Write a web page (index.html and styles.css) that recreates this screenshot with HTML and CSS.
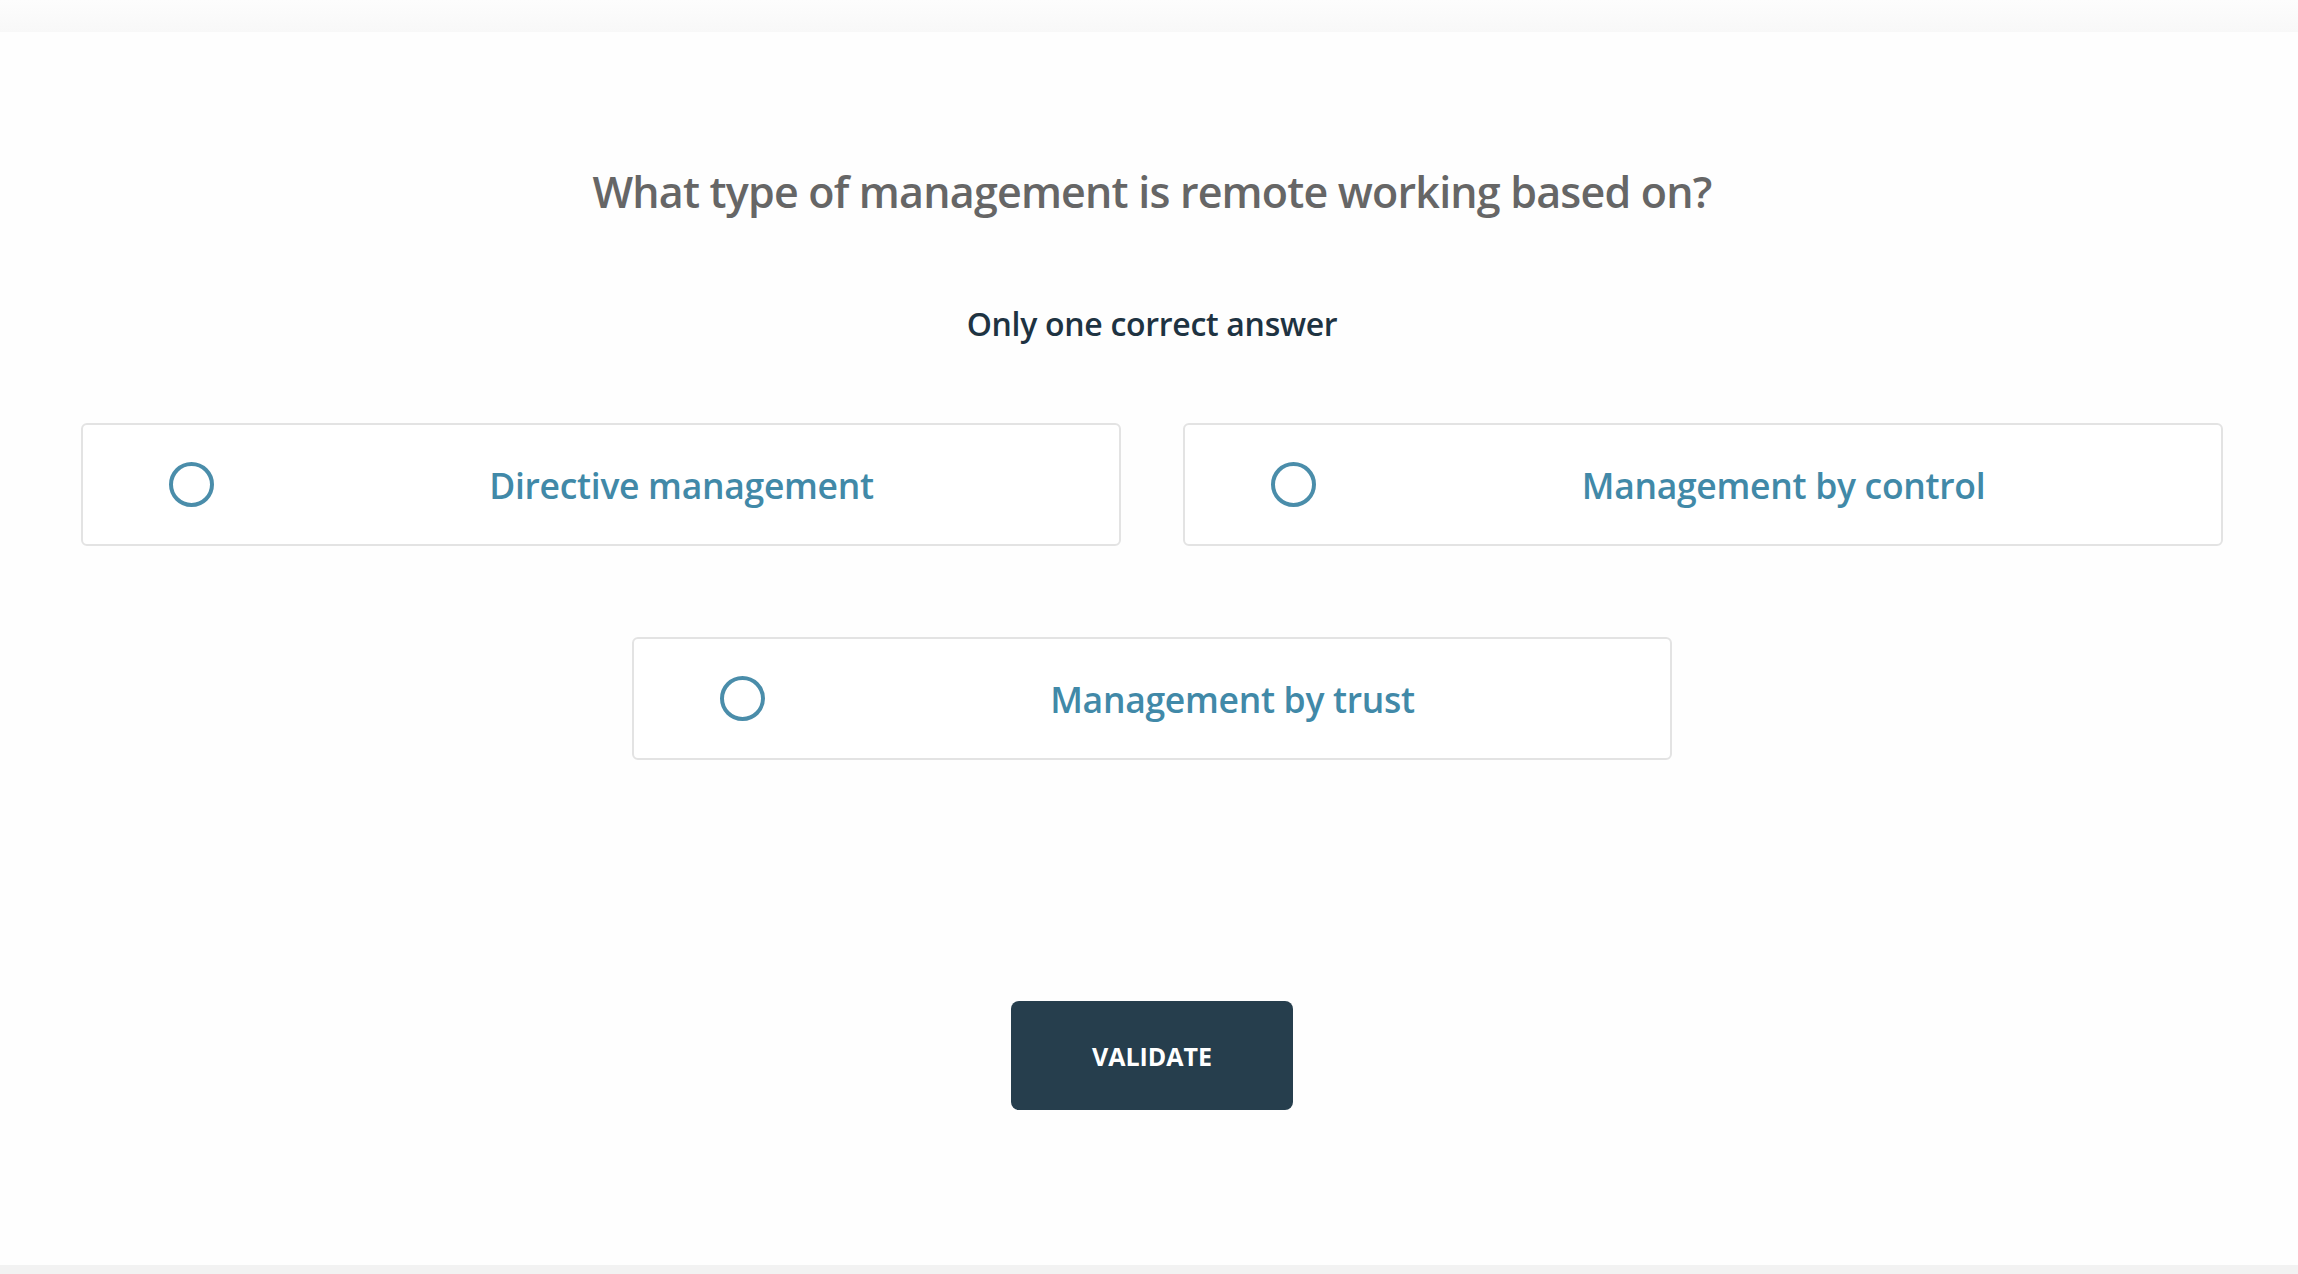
FILE: index.html
```html
<!DOCTYPE html>
<html lang="en">
<head>
    <meta charset="UTF-8">
    <title>Quiz</title>
    <link rel="stylesheet" href="styles.css">
</head>
<body>
    <div class="topbar"></div>
    <main class="quiz">
        <h1 class="question">What type of management is remote working based on?</h1>
        <p class="hint">Only one correct answer</p>
        <form class="answers">
            <label class="answer">
                <span class="radio"></span>
                <span class="answer-text">Directive management</span>
            </label>
            <label class="answer">
                <span class="radio"></span>
                <span class="answer-text">Management by control</span>
            </label>
            <label class="answer answer-last">
                <span class="radio"></span>
                <span class="answer-text">Management by trust</span>
            </label>
        </form>
        <button class="validate" type="button">VALIDATE</button>
    </main>
    <div class="bottombar"></div>
</body>
</html>
```

FILE: styles.css
```css
html, body {
    height: 100%;
}
body {
    font-family: "Open Sans", Arial, sans-serif;
    margin: 0;
    padding: 0;
    background-color: #fefefe;
    display: flex;
    flex-direction: column;
}
.topbar {
    height: 32px;
    background: linear-gradient(#fdfdfd, #f8f8f8);
}
.bottombar {
    height: 9px;
    background-color: #f2f2f2;
}
.quiz {
    flex: 1;
    display: flex;
    flex-direction: column;
    align-items: center;
    padding-top: 133px;
    padding-left: 6px;
}
.question {
    margin: 0;
    font-size: 43px;
    line-height: 53px;
    font-weight: 600;
    color: #666666;
    letter-spacing: -0.8px;
}
.hint {
    margin: 87px 0 0;
    font-size: 32px;
    line-height: 37px;
    font-weight: 600;
    color: #1e3342;
    letter-spacing: -0.3px;
}
.answers {
    margin-top: 81px;
    width: 2142px;
    display: grid;
    grid-template-columns: 1fr 1fr;
    gap: 91px 62px;
}
.answer {
    display: flex;
    align-items: center;
    height: 123px;
    box-sizing: border-box;
    padding-left: 86px;
    border: 2px solid #e3e3e3;
    border-radius: 6px;
    background-color: white;
    cursor: pointer;
}
.answer-last {
    grid-column: 1 / 3;
    justify-self: center;
    width: 1040px;
}
.radio {
    width: 45px;
    height: 45px;
    box-sizing: border-box;
    border: 4px solid #4a8daa;
    border-radius: 50%;
    margin-right: 30px;
    flex-shrink: 0;
}
.answer-text {
    flex: 1;
    text-align: center;
    font-size: 35.5px;
    font-weight: 600;
    color: #4189a8;
    letter-spacing: -0.3px;
}
.validate {
    margin-top: 241px;
    width: 282px;
    height: 109px;
    border: none;
    border-radius: 8px;
    background-color: #263e4d;
    color: white;
    font-family: "Open Sans", Arial, sans-serif;
    font-size: 25px;
    font-weight: 700;
    cursor: pointer;
}
```
